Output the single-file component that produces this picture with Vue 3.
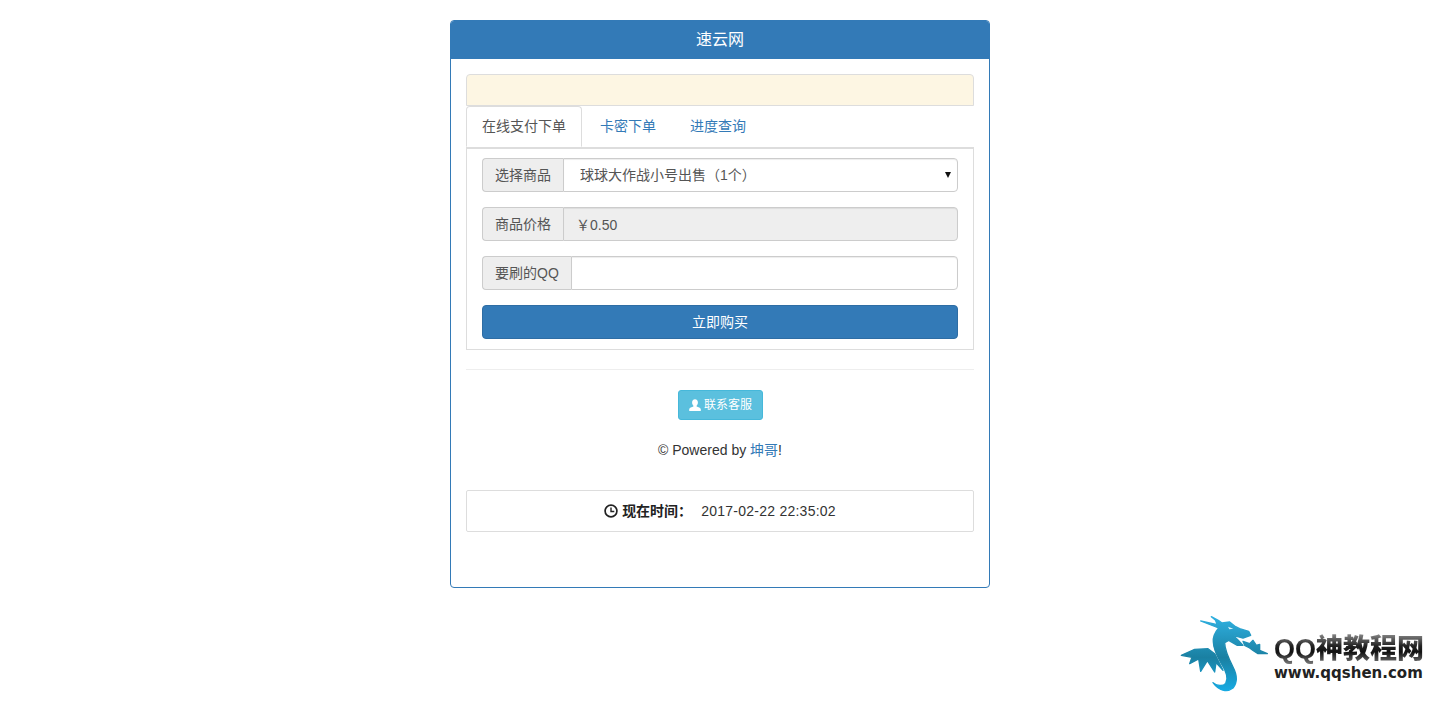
<script setup>
const tabs = [
  { label: '在线支付下单', active: true },
  { label: '卡密下单', active: false },
  { label: '进度查询', active: false },
]
</script>

<template>
  <div class="page">
    <div class="panel">
      <div class="heading">速云网</div>
      <div class="body">
        <div class="alert"></div>
        <ul class="tabs">
          <li v-for="t in tabs" :key="t.label" class="tab" :class="{ active: t.active }">{{ t.label }}</li>
        </ul>
        <div class="tab-box">
          <div class="group">
            <span class="addon">选择商品</span>
            <div class="select-wrap">
              <select class="control select">
                <option>球球大作战小号出售（1个）</option>
              </select>
              <span class="caret"></span>
            </div>
          </div>
          <div class="group">
            <span class="addon">商品价格</span>
            <input class="control readonly" value="￥0.50" disabled />
          </div>
          <div class="group">
            <span class="addon">要刷的QQ</span>
            <input class="control" />
          </div>
          <button class="buy">立即购买</button>
        </div>
        <hr class="rule" />
        <div class="center">
          <button class="service">
            <svg class="user" viewBox="0 0 12 12"><path d="M6 .3c1.900 0 2.900 1.400 2.900 3.200 0 1.300-.5 2.500-1.300 3.200v.8c1.500.5 4.200 1.200 4.200 2.700V12H.2v-1.800c0-1.500 2.700-2.200 4.200-2.700v-.8C3.600 6 3.100 4.800 3.100 3.500 3.100 1.700 4.100.3 6 .3z" fill="#fff"/></svg>
            <span>联系客服</span>
          </button>
        </div>
        <p class="powered">© Powered by <a class="link">坤哥</a>!</p>
        <div class="well">
          <svg class="clock" viewBox="0 0 14 14"><circle cx="7" cy="7" r="5.900" fill="none" stroke="#222" stroke-width="1.700"/><path d="M7 3.400V7.500H10.300" fill="none" stroke="#222" stroke-width="1.400"/></svg>
          <strong class="now">现在时间：</strong>
          <span class="time">2017-02-22 22:35:02</span>
        </div>
      </div>
    </div>

    <div class="mark">
      <svg class="dragon" viewBox="0 0 285 246">
        <defs>
          <linearGradient id="dg" gradientUnits="userSpaceOnUse" x1="0" y1="15" x2="0" y2="236">
            <stop offset="0" stop-color="#2fb0e0"/>
            <stop offset="0.55" stop-color="#1a80a2"/>
            <stop offset="1" stop-color="#17aae2"/>
          </linearGradient>
        </defs>
        <g stroke="url(#dg)" stroke-width="4" stroke-linejoin="round">
          <path fill="url(#dg)" d="M100 14 L122 26 L132 33 L155 30 L170 42 L185 50 L212 58 L218 70 L195 78 L165 70 L180 84 L195 100 L178 100 L152 85 L140 92 C140 112 150 135 165 165 C178 190 178 212 165 228 C150 240 125 240 105 212 C118 222 135 224 143 214 C152 200 146 180 130 155 C116 130 106 110 106 90 C104 74 112 60 122 48 L68 27 L118 38 L112 24 Z"/>
          <path fill="url(#dg)" d="M195 88 L215 95 L225 85 L235 100 L245 97 L245 115 L268 125 L240 125 L225 115 L215 108 L200 100 Z"/>
          <path fill="url(#dg)" d="M10 130 L50 112 L90 110 L110 125 L135 175 L114 152 L110 180 L88 146 L68 178 L62 141 L35 155 L42 136 Z"/>
        </g>
        <path d="M150 44 L166 50 L154 52 Z" fill="#d8f2fb"/>
      </svg>
      <div class="brand">
        <div class="brand-title">QQ神教程网</div>
        <div class="brand-url">www.qqshen.com</div>
      </div>
    </div>
  </div>
</template>

<style>
html, body { margin: 0; overflow: hidden; background: #fff; }
</style>

<style scoped>
.page {
  box-sizing: border-box;
  height: 711px;
  padding-top: 20px;
  font-family: "Liberation Sans", "Noto Sans CJK SC", sans-serif;
  font-size: 14px;
  line-height: 20px;
  color: #333;
  text-spacing-trim: space-all;
}
.panel {
  box-sizing: border-box;
  width: 540px;
  height: 568px;
  margin: 0 auto;
  border: 1px solid #337ab7;
  border-radius: 4px;
  overflow: hidden;
}
.heading {
  height: 38px;
  background: #337ab7;
  color: #fff;
  font-size: 16px;
  line-height: 38px;
  text-align: center;
}
.body { padding: 15px; }
.alert {
  box-sizing: border-box;
  height: 32px;
  background: #fdf6e3;
  border: 1px solid #ddd;
  border-radius: 4px 4px 0 0;
}
.tabs {
  display: flex;
  height: 41px;
  margin: 0;
  padding: 0;
  list-style: none;
}
.tab {
  box-sizing: border-box;
  height: 41px;
  margin-right: 2px;
  padding: 9px 15px;
  border: 1px solid transparent;
  border-radius: 4px 4px 0 0;
  color: #337ab7;
}
.tab.active {
  color: #555;
  background: #fff;
  border-color: #ddd;
  border-bottom-color: #fff;
}
.tab-box {
  box-sizing: border-box;
  height: 203px;
  padding: 10px 15px;
  border: 1px solid #ddd;
  box-shadow: inset 0 1px 0 #ddd;
}
.group {
  display: flex;
  height: 34px;
  margin-bottom: 15px;
}
.addon {
  box-sizing: border-box;
  padding: 6px 12px;
  background: #eee;
  border: 1px solid #ccc;
  border-right: 0;
  border-radius: 4px 0 0 4px;
  color: #555;
  white-space: nowrap;
}
.control {
  box-sizing: border-box;
  flex: 1;
  width: 100%;
  min-width: 0;
  height: 34px;
  padding: 6px 12px;
  border: 1px solid #ccc;
  border-radius: 0 4px 4px 0;
  background: #fff;
  box-shadow: inset 0 1px 1px rgba(0, 0, 0, .075);
  color: #555;
  font: inherit;
  outline: none;
}
.readonly { background: #eee; opacity: 1; -webkit-text-fill-color: #555; }
.select-wrap { position: relative; flex: 1; display: flex; }
.select { appearance: none; padding-left: 16px; }
.caret {
  position: absolute;
  right: 7px;
  top: 14px;
  border-left: 3px solid transparent;
  border-right: 3px solid transparent;
  border-top: 6px solid #111;
}
.buy {
  display: block;
  box-sizing: border-box;
  width: 100%;
  height: 34px;
  padding: 6px 12px;
  background: #337ab7;
  border: 1px solid #2e6da4;
  border-radius: 4px;
  color: #fff;
  font: inherit;
}
.rule {
  height: 1px;
  margin: 19px 0 20px;
  border: 0;
  background: #eee;
}
.center { display: flex; justify-content: center; }
.service {
  display: flex;
  align-items: center;
  gap: 3px;
  box-sizing: border-box;
  height: 30px;
  margin-left: 1px;
  padding: 5px 10px;
  background: #5bc0de;
  border: 1px solid #46b8da;
  border-radius: 3px;
  color: #fff;
  font: inherit;
  font-size: 12px;
  line-height: 18px;
}
.user { width: 12px; height: 12px; }
.powered { margin: 20px 0 30px; text-align: center; }
.link { color: #337ab7; }
.well {
  display: flex;
  align-items: center;
  justify-content: center;
  box-sizing: border-box;
  height: 42px;
  border: 1px solid #ddd;
  border-radius: 2px;
}
.clock { width: 14px; height: 14px; margin-right: 4px; }
.now { font-weight: 700; color: #222; margin-right: 9px; }
.time { letter-spacing: .25px; }
.mark {
  position: absolute;
  left: 1178px;
  top: 612px;
  display: flex;
  align-items: flex-start;
}
.dragon { width: 95px; height: 82px; flex: none; }
.brand { margin-left: 1px; margin-top: 22px; width: 152px; }
.brand-title {
  font-size: 27px;
  line-height: 30px;
  font-weight: 900;
  white-space: nowrap;
  background: linear-gradient(180deg, #888 0%, #222 40%, #111 60%, #777 100%);
  -webkit-background-clip: text;
  background-clip: text;
  color: transparent;
}
.brand-url {
  margin-top: 1px;
  font-family: "DejaVu Sans", sans-serif;
  font-size: 15px;
  line-height: 17px;
  font-weight: 700;
  color: #222;
  white-space: nowrap;
}
</style>
